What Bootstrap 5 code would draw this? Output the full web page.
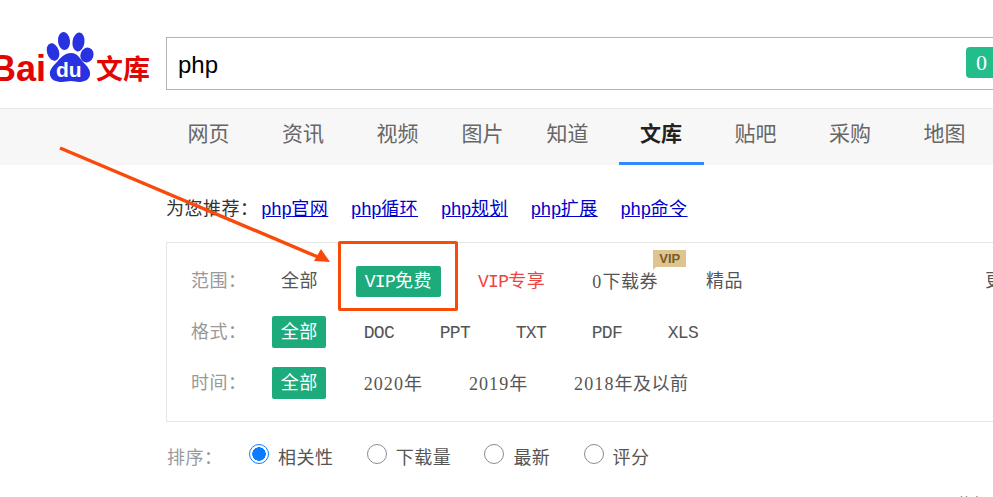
<!DOCTYPE html>
<html lang="zh-CN">
<head>
<meta charset="utf-8">
<title>php - 百度文库</title>
<link rel="stylesheet" href="https://cdn.jsdelivr.net/npm/bootstrap@5.3.0/dist/css/bootstrap.min.css">
<style>
html,body{height:497px;overflow:hidden;background:#fff}
body{position:relative;width:993px;font-family:"Liberation Mono","Noto Sans CJK SC",monospace;font-size:18px;line-height:33px;letter-spacing:.5px;color:#555}
.lat{letter-spacing:-.7px}
.ser{font-family:"Liberation Serif",serif;letter-spacing:1.1px}
.hdr{height:109px;border-bottom:1px solid #e8e8e8;padding-top:37px;overflow:hidden;letter-spacing:0}
.logo{flex:0 0 166px;height:53px}
.logo svg{overflow:visible;display:block}
.searchbox{width:900px;flex:none;height:53px;border:1px solid #b3b3b3;padding:2px 11px 0;font:24px "Liberation Sans",sans-serif;color:#000}
.searchbtn{margin-left:748px;margin-top:-4px;width:110px;height:31px;background:#22bd8a;border-radius:4px;color:#fff;font:22px/31px "Liberation Serif",serif;padding-left:10px}
.tabs{height:56px;background:#f7f7f7;padding-left:166px;overflow:hidden;white-space:nowrap;letter-spacing:0}
.tabitem{flex:none;width:85px;height:56px;margin-right:9.5px;text-align:center;font:21px/47px "Noto Sans CJK SC",sans-serif;color:#666}
.tabitem.tight{margin-right:0}
.tabitem.narrow{margin-right:8.5px}
.tabitem.on{color:#222;font-weight:700;border-bottom:3px solid #3388ff}
.recs{padding:29px 0 0 166px;height:77px;color:#333;white-space:nowrap}
.recs a{color:#00c;margin-right:22.5px}
.recs span.lead-in{margin-right:2.5px}
.filterbox{margin-left:166px;width:900px;height:180px;border:1px solid #e5e5e5;padding:23px 0 0 24px}
.frow{height:32px;line-height:34px;margin-bottom:19px;white-space:nowrap}
.frow.first{height:31px;line-height:33px}
.flabel{flex:0 0 81px;color:#999}
.fitem{flex:none;padding:0 9px;margin-right:28.3px;position:relative}
.fitem.sel{background:#1dab7c;color:#fff;border-radius:2px;padding:0 8.7px}
.fitem.hot{color:#ee4444;margin-right:29px}
.fitem.wide{margin-right:29px}
.fitem.tok{margin-right:27.7px}
.fitem.pushed{margin-right:30px}
.vipmark{position:absolute;left:70px;top:-16px;width:33px;height:17px;background:#ddc490;color:#7a5c28;font:700 13px/17px "Liberation Sans",sans-serif;letter-spacing:0;text-align:center}
.vipmark::after{content:"";position:absolute;left:0;bottom:-3px;border-top:3px solid #ddc490;border-right:3px solid transparent}
.morelink{flex:none;margin-left:205px}
.sortrow{padding:21px 0 0 167px;white-space:nowrap}
.sortlabel{flex:0 0 82px;color:#999}
.radiobox{width:20px;height:20px;margin:0 9px 12px 0;border:1.5px solid #8d8d8d;flex:none;box-shadow:none}
.radiobox:checked{border-color:#0a7cff;background:radial-gradient(circle,#0a7cff 0 6.5px,#fff 7px)}
.sortopt{margin-right:33.2px}
.nextline{margin-top:21px;padding-left:957px;font-size:14px;line-height:14px;white-space:nowrap;letter-spacing:0}
.annot-box{position:absolute;left:338px;top:241px;width:120px;height:70px;border:3px solid #fa4a0a;border-radius:2px}
.annot-arrow{position:absolute;left:0;top:0;pointer-events:none}
</style>
</head>
<body>
<header class="hdr d-flex">
  <div class="logo">
    <svg width="166" height="53" viewBox="0 37 166 53">
      <g fill="#e10601" font-family="Liberation Sans, sans-serif" font-weight="700">
        <text x="-10" y="81" font-size="36">Bai</text>
        <text x="96" y="79" font-size="27" font-family="Noto Sans CJK SC, sans-serif" textLength="54">文库</text>
      </g>
      <g fill="#2932e1">
        <ellipse cx="64" cy="41" rx="6" ry="9" transform="rotate(-6 64 41)"/>
        <ellipse cx="78.5" cy="42" rx="6" ry="9.5" transform="rotate(8 78.5 42)"/>
        <ellipse cx="53" cy="52" rx="6" ry="9" transform="rotate(-18 53 52)"/>
        <ellipse cx="87" cy="55" rx="6.5" ry="7.5" transform="rotate(20 87 55)"/>
        <path d="M71 53c6 0 9 5 12 9 4 4 8 8 7 13-1 5-6 7-11 7-3 0-5-1-8-1s-6 1-9 1c-6 0-11-2-12-7-1-5 3-9 7-13 3-4 8-9 14-9z"/>
      </g>
      <text x="56" y="77" fill="#fff" font-family="Liberation Sans, sans-serif" font-weight="700" font-size="21">du</text>
    </svg>
  </div>
  <div class="searchbox d-flex align-items-center">
    <span>php</span>
    <span class="searchbtn">0</span>
  </div>
</header>
<nav class="tabs d-flex">
  <a class="tabitem text-decoration-none">网页</a>
  <a class="tabitem text-decoration-none">资讯</a>
  <a class="tabitem tight text-decoration-none">视频</a>
  <a class="tabitem tight text-decoration-none">图片</a>
  <a class="tabitem narrow text-decoration-none">知道</a>
  <a class="tabitem on text-decoration-none">文库</a>
  <a class="tabitem text-decoration-none">贴吧</a>
  <a class="tabitem text-decoration-none">采购</a>
  <a class="tabitem text-decoration-none">地图</a>
</nav>
<div class="recs">
  <span class="lead-in">为您推荐：</span><a href="#"><span class="lat">php</span>官网</a><a href="#"><span class="lat">php</span>循环</a><a href="#"><span class="lat">php</span>规划</a><a href="#"><span class="lat">php</span>扩展</a><a href="#"><span class="lat">php</span>命令</a>
</div>
<section class="filterbox">
  <div class="frow first d-flex">
    <div class="flabel">范围：</div>
    <div class="fitem wide">全部</div>
    <div class="fitem sel"><span class="lat">VIP</span>免费</div>
    <div class="fitem hot"><span class="lat">VIP</span>专享</div>
    <div class="fitem pushed"><span class="ser">0</span>下载券<span class="vipmark">VIP</span></div>
    <div class="fitem">精品</div>
    <div class="morelink">更多</div>
  </div>
  <div class="frow d-flex">
    <div class="flabel">格式：</div>
    <div class="fitem sel">全部</div>
    <div class="fitem tok lat">DOC</div>
    <div class="fitem tok lat">PPT</div>
    <div class="fitem tok lat">TXT</div>
    <div class="fitem tok lat">PDF</div>
    <div class="fitem tok lat">XLS</div>
  </div>
  <div class="frow d-flex">
    <div class="flabel">时间：</div>
    <div class="fitem sel">全部</div>
    <div class="fitem"><span class="ser">2020</span>年</div>
    <div class="fitem"><span class="ser">2019</span>年</div>
    <div class="fitem"><span class="ser">2018</span>年及以前</div>
  </div>
</section>
<div class="sortrow d-flex align-items-center">
  <div class="sortlabel">排序：</div>
  <input class="form-check-input radiobox" type="radio" name="sort" checked aria-label="相关性"><span class="sortopt">相关性</span>
  <input class="form-check-input radiobox" type="radio" name="sort" aria-label="下载量"><span class="sortopt">下载量</span>
  <input class="form-check-input radiobox" type="radio" name="sort" aria-label="最新"><span class="sortopt">最新</span>
  <input class="form-check-input radiobox" type="radio" name="sort" aria-label="评分"><span class="sortopt">评分</span>
</div>
<div class="nextline">共有</div>
<div class="annot-box"></div>
<svg class="annot-arrow" width="993" height="497" viewBox="0 0 993 497">
  <line x1="60" y1="148" x2="318" y2="257" stroke="#fa4a0a" stroke-width="3.5"/>
  <path d="M330 262 L314 261 L321 249 Z" fill="#fa4a0a"/>
</svg>
<script src="https://cdn.jsdelivr.net/npm/bootstrap@5.3.0/dist/js/bootstrap.bundle.min.js"></script>
</body>
</html>
